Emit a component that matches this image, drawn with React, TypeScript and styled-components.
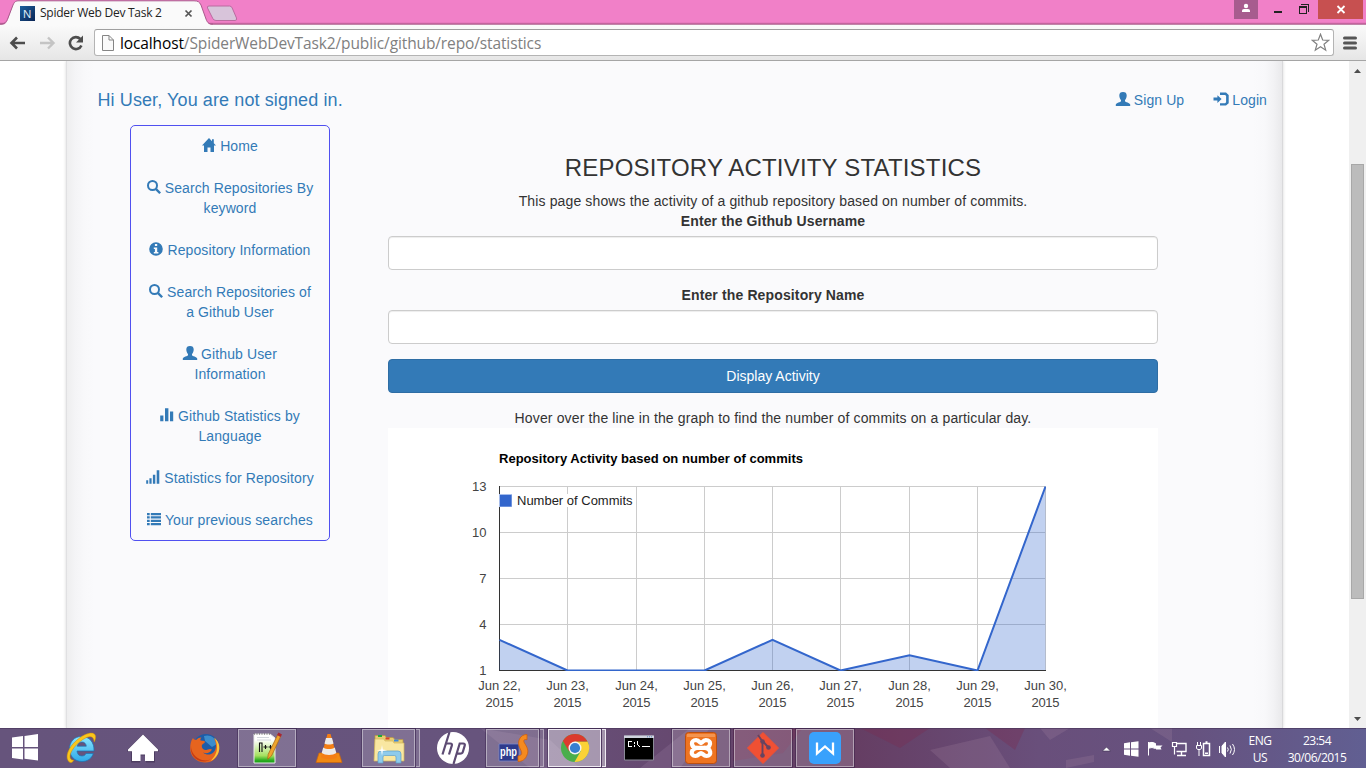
import React from "react";
import styled, { createGlobalStyle } from "styled-components";

const GlobalStyle = createGlobalStyle`
  * { box-sizing: border-box; }
  html, body, #root { margin: 0; height: 100%; }
  body { overflow: hidden; background: #fff; }
`;

const Screen = styled.div`
  width: 1366px;
  height: 768px;
  display: flex;
  flex-direction: column;
  overflow: hidden;
  font-family: "Liberation Sans", Arial, sans-serif;
  font-size: 14px;
  line-height: 20px;
  color: #333;
`;

/* ---------- Browser chrome ---------- */

const TitleBar = styled.header`
  height: 25px;
  flex: none;
  display: flex;
  justify-content: space-between;
  align-items: flex-start;
  background: linear-gradient(#f180c8 0 22px, #e072b6 23px, #a85587 24px, #d9b3ca 25px);
`;

const TabArt = styled.svg`
  grid-area: 1 / 1;
  display: block;
`;

const TabStrip = styled.div`
  display: grid;
  width: 245px;
  height: 25px;
`;

const TabContent = styled.div`
  grid-area: 1 / 1;
  z-index: 1;
  display: flex;
  align-items: center;
  height: 25px;
  padding: 1px 0 0 20px;
`;

const TabTitle = styled.span`
  width: 126px;
  margin-left: 5px;
  font: 12px/16px "Open Sans", "Noto Sans", sans-serif;
  letter-spacing: -0.26px;
  color: #222;
  white-space: nowrap;
`;

const CloseTab = styled.svg`
  display: block;
  margin-left: 18px;
`;

const WindowControls = styled.div`
  display: flex;
  height: 19px;
  margin-right: 3px;
`;

const ControlButton = styled.div<{ $width: number; $bg?: string }>`
  width: ${(p) => p.$width}px;
  height: 19px;
  background: ${(p) => p.$bg ?? "transparent"};
  svg { display: block; }
`;

const Toolbar = styled.div`
  height: 36px;
  flex: none;
  display: flex;
  align-items: center;
  padding: 0 9px 0 9px;
  background: linear-gradient(#fafafa, #e6e6e6);
  border-bottom: 1px solid #a5a5a5;
`;

const NavIcon = styled.svg<{ $gap: number }>`
  display: block;
  flex: none;
  margin-right: ${(p) => p.$gap}px;
`;

const AddressBar = styled.div`
  flex: 1;
  height: 27px;
  display: flex;
  align-items: center;
  margin-right: 9px;
  padding: 0 3px 0 7px;
  background: #fff;
  border: 1px solid #b4b4b4;
  border-top-color: #9f9f9f;
  border-radius: 3px;
`;

const Url = styled.span`
  flex: 1;
  margin-left: 6px;
  font: 15.5px/22px "Open Sans", "Noto Sans", sans-serif;
  letter-spacing: -0.12px;
  color: #808080;
  b { font-weight: 400; color: #000; }
`;

/* ---------- Page ---------- */

const Viewport = styled.div`
  flex: 1;
  min-height: 0;
  display: flex;
  overflow: hidden;
`;

const PageArea = styled.div`
  flex: 1;
  display: flex;
  overflow: hidden;
  padding: 0 66px;
`;

const Sheet = styled.div`
  flex: 1;
  padding: 0 16px 0 31px;
  height: 667px;
  background:
    linear-gradient(to right, #e0e0e2 0 1px, #eeeeef 1px, #f4f4f6 9px, #f8f8fa 18px, rgba(250, 250, 252, 0) 28px) left / 34px 100% no-repeat,
    linear-gradient(to left, #d9d9db 0 1px, #e9e9eb 1px, #f2f2f4 9px, #f8f8fa 18px, rgba(250, 250, 252, 0) 30px) right / 34px 100% no-repeat,
    #fafafc;
  box-shadow: 0 0 3px rgba(0, 0, 0, 0.16);
`;

const PageHeader = styled.div`
  display: flex;
  justify-content: space-between;
  height: 64px;
  padding-top: 29px;
  color: #337ab7;
`;

const Greeting = styled.span`
  font-size: 18px;
  letter-spacing: 0.1px;
  padding-left: 0.5px;
`;

const HeaderLinks = styled.nav`
  display: flex;
  gap: 30px;
`;

const Link = styled.a`
  color: #337ab7;
  text-decoration: none;
  letter-spacing: 0.1px;
`;

const Glyph = styled.svg`
  width: 14px;
  height: 14px;
  vertical-align: -1px;
  fill: currentColor;
`;

const Columns = styled.div`
  display: flex;
  align-items: flex-start;
  padding-left: 33px;
`;

const SideNav = styled.nav`
  width: 200px;
  flex: none;
  display: flex;
  flex-direction: column;
  gap: 2px;
  border: 1px solid #5050f0;
  border-radius: 5px;
`;

const SideItem = styled(Link)`
  display: block;
  padding: 10px 15px;
  text-align: center;
`;

const Main = styled.main`
  width: 770px;
  margin-left: 58px;
  padding-top: 29px;
  text-align: center;
`;

const Heading = styled.h3`
  margin: 0 0 10px;
  font-size: 24px;
  line-height: 27px;
  font-weight: 400;
  letter-spacing: 0.19px;
`;

const Text = styled.p<{ $top?: number }>`
  margin: ${(p) => p.$top ?? 0}px 0 0;
  letter-spacing: 0.135px;
`;

const Field = styled.label`
  display: block;
  margin-bottom: 15px;
  font-weight: 700;
  letter-spacing: 0.13px;
`;

const Input = styled.input`
  display: block;
  width: 100%;
  height: 34px;
  margin-top: 5px;
  padding: 6px 12px;
  background: #fff;
  border: 1px solid #ccc;
  border-radius: 4px;
  box-shadow: inset 0 1px 1px rgba(0, 0, 0, 0.075);
`;

const Submit = styled.button`
  display: block;
  width: 100%;
  height: 34px;
  padding: 0;
  font: 14px/20px "Liberation Sans", Arial, sans-serif;
  color: #fff;
  background: #337ab7;
  border: 1px solid #2e6da4;
  border-radius: 4px;
`;

const Chart = styled.svg`
  display: block;
  background: #fff;
  font-family: "Liberation Sans", Arial, sans-serif;
  font-size: 13px;
`;

const Scrollbar = styled.div`
  width: 17px;
  display: flex;
  flex-direction: column;
  align-items: center;
  background: #f0f0f0;
`;

const ScrollThumb = styled.div`
  width: 13px;
  height: 436px;
  margin: 86px 0 112px;
  background: #bcbcbc;
  border: 1px solid #a8a8a8;
`;

const ScrollArrow = styled.svg`
  display: block;
  flex: none;
`;

/* ---------- Taskbar ---------- */

const Taskbar = styled.footer`
  height: 40px;
  flex: none;
  display: grid;
`;

const Wallpaper = styled.svg`
  grid-area: 1 / 1;
  display: block;
`;

const TaskRow = styled.div`
  grid-area: 1 / 1;
  z-index: 1;
  display: flex;
  height: 40px;
  color: #fff;
`;

const StartButton = styled.div`
  width: 50px;
  height: 40px;
  svg { display: block; }
`;

const TaskSlot = styled.div`
  width: 62px;
  height: 40px;
  display: flex;
  justify-content: center;
  padding: 1px 2px;
`;

const TaskButton = styled.div<{ $kind: "plain" | "open" | "stack" | "active" }>`
  flex: 1;
  display: flex;
  align-items: center;
  justify-content: center;
  height: 38px;
  ${(p) =>
    p.$kind !== "plain" &&
    `
    background: ${p.$kind === "active" ? "rgba(255,255,255,.42)" : "rgba(255,255,255,.17)"};
    border: 1px solid ${p.$kind === "active" ? "#efeaf2" : "rgba(255,255,255,.42)"};
    box-shadow: 0 0 0 1px rgba(40,20,60,.35);
  `}
  svg { display: block; }
`;

const StackEdge = styled.div<{ $active?: boolean }>`
  width: 4px;
  height: 38px;
  margin-left: 1px;
  background: ${(p) => (p.$active ? "rgba(255,255,255,.4)" : "rgba(255,255,255,.15)")};
  border: 1px solid ${(p) => (p.$active ? "#efeaf2" : "rgba(255,255,255,.4)")};
  border-left: 0;
`;

const Tray = styled.div`
  display: flex;
  margin-left: auto;
  padding-right: 12px;
  font: 12px/17px "Open Sans", "Noto Sans", sans-serif;
  text-align: center;
`;

const TrayText = styled.div<{ $width: number }>`
  width: ${(p) => p.$width}px;
  padding-top: 4px;
  letter-spacing: -0.5px;
  white-space: nowrap;
`;

/* ---------- Icons ---------- */

type GlyphName = "home" | "search" | "info" | "user" | "stats" | "signal" | "list" | "login";

const glyphs: Record<GlyphName, React.ReactNode> = {
  home: <path d="M7 0 0 7.6h2V14h3.5v-4.5h3V14H12V7.6h2L11.8 5.2V1.3H10v2z" />,
  search: (
    <>
      <circle cx="5.5" cy="5.5" r="4.5" fill="none" stroke="currentColor" strokeWidth="2" />
      <path d="m8.200 9.900 1.700-1.600 4.100 4.100-1.700 1.600z" />
    </>
  ),
  info: (
    <path
      fillRule="evenodd"
      d="M7 .2a6.8 6.8 0 1 0 0 13.6A6.8 6.8 0 0 0 7 .2zM5.9 2.1h2.3v2H5.9zM4.8 5.5h3.4v4.6h1.2v1.5H4.8v-1.5h1.1V7H4.8z"
    />
  ),
  user: (
    <path d="M7 0c2.5 0 3.700 1.200 3.700 3.400 0 1.6-.700 3.500-1.700 4.600v1.2c.3.9 4.900 1.400 5.200 3.400V14H-.200v-1.4c.3-2 4.900-2.500 5.200-3.400V8C4 6.900 3.300 5 3.300 3.400 3.300 1.200 4.500 0 7 0z" />
  ),
  stats: <path d="M.2 7.500h3.200v5.700H.2zM5 .300h3.400v12.900H5zM10 3.500h3.200v9.700H10z" />,
  signal: <path d="M.2 10.200h2v3.500h-2zM3.400 8.300h2.200v5.400H3.400zM6.900 4.700h2.400v9H6.900zM10.700.200h2.600v13.500h-2.600z" />,
  list: (
    <path d="M0 .900h2.700v2.300H0zM3.800.900H14v2.300H3.800zM0 4.300h2.700v2.300H0zM3.800 4.300H14v2.300H3.800zM0 7.700h2.700V10H0zM3.800 7.700H14V10H3.800zM0 11h2.700v2.300H0zM3.800 11H14v2.300H3.800z" />
  ),
  login: (
    <>
      <path d="M-.500 5.500h3.900V3.200l4.200 3.900L3.400 11V8.500H-.500z" />
      <path d="M6 .600h6L14.700 3v8.200L12 13.500H6v-2.200h5.100l1-1V4l-1-1H6z" />
    </>
  ),
};

const Icon = ({ name }: { name: GlyphName }) => <Glyph viewBox="0 0 14 14" overflow="visible">{glyphs[name]}</Glyph>;

const sideItems: { icon: GlyphName; label: string }[] = [
  { icon: "home", label: "Home" },
  { icon: "search", label: "Search Repositories By keyword" },
  { icon: "info", label: "Repository Information" },
  { icon: "search", label: "Search Repositories of a Github User" },
  { icon: "user", label: "Github User Information" },
  { icon: "stats", label: "Github Statistics by Language" },
  { icon: "signal", label: "Statistics for Repository" },
  { icon: "list", label: "Your previous searches" },
];

const xs = [111.5, 179.5, 248.5, 316.5, 384.5, 452.5, 521.5, 589.5, 657.5];
const yTicks = [13, 10, 7, 4, 1];
const commits = [3, 1, 1, 1, 3, 1, 2, 1, 13];
const yOf = (v: number) => 242.5 - ((v - 1) / 12) * 184;

const ActivityChart = () => {
  const line = commits.map((v, i) => `${xs[i]},${yOf(v)}`).join(" ");
  return (
    <Chart width="770" height="300">
      <text x="111" y="35" fontWeight="700" fill="#000" textLength="304">
        Repository Activity based on number of commits
      </text>
      <g stroke="#ccc" shapeRendering="crispEdges">
        {yTicks.map((v) => (
          <line key={v} x1="111" x2="658" y1={yOf(v)} y2={yOf(v)} />
        ))}
        {xs.map((x) => (
          <line key={x} x1={x} x2={x} y1="58" y2="243" />
        ))}
      </g>
      <path d="M111.5 58V243" stroke="#333" shapeRendering="crispEdges" />
      <polygon points={`111.5,242.5 ${line} 657.5,242.5`} fill="#3366cc" fillOpacity=".3" />
      <path d="M111 242.500H658" stroke="#333" shapeRendering="crispEdges" />
      <clipPath id="plot"><rect x="111" y="58" width="547" height="185" /></clipPath>
      <polyline clipPath="url(#plot)" points={line} fill="none" stroke="#3366cc" strokeWidth="2" />
      <rect x="124" y="66" width="121" height="13" fill="#fff" />
      <rect x="111" y="66" width="13" height="13" fill="#a6bdec" />
      <rect x="112" y="67" width="11.500" height="11.500" fill="#3366cc" />
      <text x="129" y="77" fill="#222" textLength="115.500">Number of Commits</text>
      <g fill="#444" textAnchor="end">
        {yTicks.map((v) => (
          <text key={v} x="98.500" y={yOf(v) + 4.500}>{v}</text>
        ))}
      </g>
      <g fill="#444" textAnchor="middle">
        {xs.map((x, i) => (
          <React.Fragment key={x}>
            <text x={x} y="262" textLength="42.500">{`Jun ${22 + i},`}</text>
            <text x={x} y="279" textLength="28">2015</text>
          </React.Fragment>
        ))}
      </g>
    </Chart>
  );
};

const TaskSvg = ({ children }: { children: React.ReactNode }) => (
  <svg width="32" height="32" viewBox="0 0 32 32">{children}</svg>
);

const IconIE = () => (
  <TaskSvg>
    <defs>
      <linearGradient id="ie" x1="0" y1="0" x2="0" y2="1">
        <stop offset="0" stopColor="#8be6ff" />
        <stop offset="1" stopColor="#2fa9e8" />
      </linearGradient>
    </defs>
    <path
      d="M16.500 4.500C9 4.500 4.500 10 4.500 17S9.500 29.500 17 29.500c5.500 0 9.700-3 11.300-8h-7.300c-.800 1.700-2.200 2.500-4 2.500-3 0-4.800-1.900-5-5h17C29.500 10.500 24.500 4.500 16.500 4.500zM12.200 14.200c.500-2.600 2.300-4.200 4.700-4.200s4.100 1.600 4.400 4.200z"
      fill="url(#ie)" stroke="#1874b4" strokeWidth=".7"
    />
    <path d="M5 30.500C-1 27 2.500 16 12 8 19.500 1.500 28-1 30.200 3c.900 1.800.300 4.300-1 7C28.800 5 26 3.300 21 5.800 12 10 3.500 21 5.200 26c.500 1.600 2 2.200 3.600 2.200C7.800 30 6.500 31 5 30.500z" fill="#fac61c" stroke="#c98a0c" strokeWidth=".5" />
  </TaskSvg>
);

const IconHome = () => (
  <TaskSvg>
    <path d="M16 2 .500 17.500V20H4v10.500h9v-7h6v7h9V20h3.500v-2.500z" fill="#3c2e50" opacity=".6" />
    <path d="M16 2.500 1 17.500v1.800h4V29h8.500v-6.500h4.500V29H27v-9.700h4v-1.800z" fill="#fff" />
  </TaskSvg>
);

const IconFirefox = () => (
  <TaskSvg>
    <circle cx="17" cy="15" r="13" fill="#1d5ca8" />
    <path d="M15 4c5-2 12 1 13 8l-5 3-7-6z" fill="#4aa3dc" opacity=".7" />
    <path d="M4 6c.700 1.500 2 2 3.500 1.800C9 6 10.500 5.300 12.500 5.500c-1 1-1.300 2-1 3 1.500.400 4.500 0 4.500 1.500-.500 1.700-3 2-3.200 3.500-.100 2.500.700 3.500 3.200 4.500 3 0 4.500-2 7-.500-1.500 3.500-6 4.500-9 3 5 4.500 13 1.500 13-7 0-3-1-5.500-2.500-7.500 4.500 3 6.500 8 5.500 13-1.500 7-7 12-14.500 11.500C7 30 1 24 1.200 16 1.300 12 2 8.500 4 6z" fill="#e6641f" />
    <path d="M25 5.500c4.500 3.500 6 8 5 13-1 5-4.500 9-8.500 10.500 4-4 6.500-8 6.500-14 0-3.500-1-7-3-9.500z" fill="#fbc53a" />
    <path d="M2 14c0 6 4 12 11 14 3 .800 6 .500 8-.500-5 3.500-12 2.500-16.500-3C2 21 1.500 17.500 2 14z" fill="#c63c14" />
  </TaskSvg>
);

const IconNotepad = () => (
  <TaskSvg>
    <defs>
      <linearGradient id="npp" x1="0" y1="0" x2="0" y2="1">
        <stop offset=".2" stopColor="#fff" /><stop offset=".75" stopColor="#a4e05e" /><stop offset=".9" stopColor="#2fae22" /><stop offset="1" stopColor="#139b13" />
      </linearGradient>
    </defs>
    <path d="M3 2h16l5 4v25H3z" fill="url(#npp)" stroke="#e9e9e9" />
    <path d="M3 2h16" stroke="#555" strokeDasharray="1 1.500" />
    <path d="M6 5.500h12M6 8h14" stroke="#c9ced6" strokeWidth=".8" />
    <path d="M8.500 20V11h2.500v9M12.500 15h4M14.500 13v4M17.500 15h4M19.500 13v4" stroke="#111" strokeWidth="1.100" fill="none" />
    <path d="m27 2 3 1.700L20.500 24l-3.800 3.200.500-4.900z" fill="#eda52e" stroke="#a86314" strokeWidth=".7" />
    <path d="m26 3 1.500-2.500L31 2.500 29.500 5z" fill="#a82632" />
  </TaskSvg>
);

const IconVlc = () => (
  <TaskSvg>
    <path d="M6 21h20l3 9.500H3z" fill="#f28a12" stroke="#cc650a" strokeWidth=".7" />
    <path d="m14.500 2h3l6.500 23c-3 3-13 3-16 0z" fill="#f57e14" />
    <path d="m13 6h6l1.500 5.500c-2 1.300-7 1.300-9 0zM10.200 15.500c3 2 8.600 2 11.600 0l1.500 5.500c-3.500 2.500-11 2.500-14.600 0z" fill="#eceae8" />
  </TaskSvg>
);

const IconExplorer = () => (
  <TaskSvg>
    <path d="M2 3.500h10l1.500 2H20l2 2h8V28H2z" fill="#e7cc70" stroke="#b79742" strokeWidth=".7" />
    <path d="M2 7h9l1 2h8l1 2h10v18H1z" fill="#f9e7a1" stroke="#d2b45c" strokeWidth=".7" />
    <path d="M5 3h4v2H5z" fill="#1ea93a" /><path d="M12.500 5.500h4v2h-4z" fill="#d8402c" /><path d="M21 7.500h4.500v2H21z" fill="#3b87dc" />
    <path d="M5 31V22q0-3 3-3h17q3 0 3 3v9h-5v-6q0-1.500-1.500-1.500h-10Q10 23.500 10 25v6z" fill="#8ecbec" stroke="#5d9fca" strokeWidth=".7" />
    <path d="m9 13 .8 4.500 4.500.800-4.500.800L9 23.500l-.800-4.400-4.500-.800 4.500-.8z" fill="#fff" />
  </TaskSvg>
);

const IconHp = () => (
  <TaskSvg>
    <circle cx="16" cy="16" r="16" fill="#fff" />
    <g fill="none" stroke="#5d4b73" strokeWidth="2.200">
      <path d="M12.500 0 5.500 22.500" />
      <path d="M9 11.500h4.300q2.200 0 1.500 2.200L12 22.500" />
      <path d="M16.500 32 22.700 11.500h3.400q2.300 0 1.600 2.200l-1.800 6q-.600 2-2.900 2h-3" />
    </g>
  </TaskSvg>
);

const IconPhp = () => (
  <TaskSvg>
    <path d="M2 12h20v17H2z" fill="#2e3b8c" stroke="#7a86c8" strokeWidth=".8" />
    <text x="3" y="24" fontFamily="Liberation Sans, sans-serif" fontWeight="700" fontSize="13" fill="#fff" textLength="17" lengthAdjust="spacingAndGlyphs">php</text>
    <path d="M30 2.500v5.200c-3-.700-4 .800-2.500 3.300 2.500 4 4.500 7.500 2.500 12-1.500 4.500-5 6.500-9 6.500v-5.500c3.500-.500 4.500-2 3-5.500-2-4-3.500-7-1.500-11.500 1.500-3 4-4.500 7.500-4.500z" fill="#f58a1f" stroke="#d0600c" strokeWidth=".8" />
  </TaskSvg>
);

const IconChrome = () => (
  <TaskSvg>
    <circle cx="16" cy="16" r="14" fill="#4aae4c" />
    <path d="M16 9.500h12.500A14 14 0 0 1 15.500 30l6.200-10.700z" fill="#fbd237" />
    <path d="M3.900 9 10.200 19.500 16 9.500h12.500A14 14 0 0 0 3.900 9z" fill="#dc3a2e" />
    <circle cx="16" cy="16" r="6.500" fill="#f5f5f5" />
    <circle cx="16" cy="16" r="5.100" fill="#367fd1" />
  </TaskSvg>
);

const IconCmd = () => (
  <TaskSvg>
    <path d="M1.500 4h29v24h-29z" fill="#000" stroke="#8b8b98" />
    <path d="M1 3.500h30V6H1z" fill="#cfd3dd" />
    <path d="M24 4.800h5" stroke="#5c86c0" strokeDasharray="1 1" />
    <g stroke="#fff" fill="none" shapeRendering="crispEdges">
      <path d="M9 9.500H5.500v5H9M11.500 10v2M11.500 13v2M14.500 9v3l2 3M19 14.500h8" />
    </g>
  </TaskSvg>
);

const IconXampp = () => (
  <TaskSvg>
    <rect x=".5" y=".5" width="31" height="31" rx="3" fill="#ee7421" stroke="#bb4f10" />
    <path d="M2 2h28v3H2z" fill="#f7a365" opacity=".7" />
    <g fill="none" stroke="#fff" strokeWidth="4.200" strokeLinecap="round" strokeLinejoin="round">
      <path d="M7.500 13.500C5 8 12 6.500 14.500 10L16 11l1.500-1C20 6.500 27 8 24.500 13.500 24 15.500 21 16 19.500 15.800" />
      <path d="M7.500 13.500c.500 2 3 2.500 5 2.300C6 16 4.500 24 10.500 24c3 0 4-3 5.500-3s2.500 3 5.500 3c6 0 4.500-8-2-8.200h-7" />
    </g>
  </TaskSvg>
);

const IconGit = () => (
  <TaskSvg>
    <path d="M16 .500 31.500 16 16 31.500.500 16z" fill="#f05033" stroke="#f05033" strokeLinejoin="round" />
    <path d="m11 3 4.500 6.500V23M16 9.500l5.500 6" stroke="#67435f" strokeWidth="1.900" fill="none" />
    <circle cx="15.500" cy="9.500" r="2.300" fill="#67435f" />
    <circle cx="15.500" cy="23.500" r="2.300" fill="#67435f" />
    <circle cx="21.500" cy="15.500" r="2.300" fill="#67435f" />
  </TaskSvg>
);

const IconWps = () => (
  <TaskSvg>
    <rect width="32" height="32" rx="5" fill="#39a1fc" />
    <path d="M8 10.500v11l8-7 8 7v-11" fill="none" stroke="#fff" strokeWidth="2.300" />
  </TaskSvg>
);

const tasks: { id: string; art: React.ReactNode; kind: "plain" | "open" | "stack" | "active" }[] = [
  { id: "ie", art: <IconIE />, kind: "plain" },
  { id: "home", art: <IconHome />, kind: "plain" },
  { id: "firefox", art: <IconFirefox />, kind: "plain" },
  { id: "notepad", art: <IconNotepad />, kind: "open" },
  { id: "vlc", art: <IconVlc />, kind: "plain" },
  { id: "explorer", art: <IconExplorer />, kind: "stack" },
  { id: "hp", art: <IconHp />, kind: "plain" },
  { id: "php", art: <IconPhp />, kind: "stack" },
  { id: "chrome", art: <IconChrome />, kind: "active" },
  { id: "cmd", art: <IconCmd />, kind: "plain" },
  { id: "xampp", art: <IconXampp />, kind: "open" },
  { id: "git", art: <IconGit />, kind: "open" },
  { id: "wps", art: <IconWps />, kind: "open" },
];

const TrayIcons = () => (
  <svg width="144" height="40" fill="none">
    <path d="m6.500 23 4-4 4 4z" fill="#fff" stroke="#3b2b4e" strokeWidth=".6" />
    <path d="M28 15.200l6-.900v6.200h-6zM35 14.200l7.500-1v7.300H35zM28 21.500h6v6.200l-6-.900zM35 21.500h7.500v7.200L35 27.700z" fill="#fff" />
    <path d="M52.500 14v13.500M52.500 15q3.500-1.500 7 .500v5q-3.500-1.800-7-.300" stroke="#fff" fill="#fff" />
    <path d="M60 17.500h6.500l-2 2 1 2H60z" fill="#fff" />
    <path d="M81 15.500h9v8H80.500M85.500 24v3M81 27.500h9" stroke="#fff" strokeWidth="1.400" />
    <path d="M76.500 14.500h4v4h-4zM78.500 18.500v8" stroke="#fff" strokeWidth="1.200" />
    <path d="M107.500 15.500h6v12h-6zM109.500 14h2" stroke="#fff" strokeWidth="1.500" />
    <path d="M109 24.500h3v1.500h-3z" fill="#fff" />
    <path d="M101.500 14v3M104.500 14v3M100.500 17.500h5v3l-1.500 1h-2l-1.500-1zM103 21v7" stroke="#fff" />
    <path d="M123.500 18v7M126 18l3.500-4v15L126 25z" fill="#fff" stroke="#fff" />
    <path d="M131.500 19.500q1.500 2 0 4M134 17.500q2.700 4 0 8M136.500 16q4 5.500 0 11" stroke="#fff" />
  </svg>
);

export default function App() {
  return (
    <Screen>
      <GlobalStyle />
      <TitleBar>
        <TabStrip>
          <TabArt width="245" height="25">
            <path d="M0 25C5 25 6.500 23 8 19L13 5C14.500 1.500 16 .800 19 .800H194C198 .800 199.500 2 201 5L206 19C207.500 23 209 25 213 25z" fill="#fafafa" />
            <path d="M0 24C5 24 6.500 22 8 18L13 5C14.500 1.500 16 .800 19 .800H194C198 .800 199.500 2 201 5L206 19C207.500 23 209 24 213 24" fill="none" stroke="#a95a8c" />
            <path d="M209 6h20.500q2 0 2.700 2l4.300 10q.700 2.500-1.500 2.500H216q-2.500 0-3.300-2.200L207.500 8q-.700-2 1.500-2z" fill="#d8c4da" stroke="#ba6ba0" />
          </TabArt>
          <TabContent>
            <svg width="15" height="15">
              <defs>
                <linearGradient id="fav" x1="0" y1="0" x2="1" y2="1">
                  <stop offset="0" stopColor="#1b5f9c" /><stop offset="1" stopColor="#0a2454" />
                </linearGradient>
              </defs>
              <rect width="15" height="15" fill="url(#fav)" />
              <text x="3" y="11.500" fontFamily="Liberation Sans, sans-serif" fontSize="11.500" fill="#dbe8f4">N</text>
            </svg>
            <TabTitle>Spider Web Dev Task 2</TabTitle>
            <CloseTab width="9" height="9"><path d="m1.500 1.500 6 6m0-6-6 6" stroke="#555" strokeWidth="1.700" /></CloseTab>
          </TabContent>
        </TabStrip>
        <WindowControls>
          <ControlButton $width={24} $bg="#a75c8e">
            <svg width="24" height="19"><circle cx="12" cy="6" r="2.200" fill="#fff" /><path d="M8 12V10.500Q8 9 10 9h4q2 0 2 1.500V12z" fill="#fff" /></svg>
          </ControlButton>
          <ControlButton $width={30}>
            <svg width="30" height="19"><path d="M16 11h8v2h-8z" fill="#222" /></svg>
          </ControlButton>
          <ControlButton $width={30}>
            <svg width="30" height="19" shapeRendering="crispEdges"><path d="M11.500 6.500h7v7h-7z" fill="none" stroke="#222" /><path d="M11 6h8v2h-8zM13 4h8v1h-8zM20 4h1v8h-1z" fill="#222" /></svg>
          </ControlButton>
          <ControlButton $width={45} $bg="#c75050">
            <svg width="45" height="19"><path d="m19.500 6 7 7m0-7-7 7" stroke="#fff" strokeWidth="1.800" /></svg>
          </ControlButton>
        </WindowControls>
      </TitleBar>
      <Toolbar>
        <NavIcon $gap={14} width="17" height="16" fill="none" stroke="#4d4d4d" strokeWidth="2.600"><path d="M16 8H3M8 2.500 2.500 8 8 13.500" /></NavIcon>
        <NavIcon $gap={12} width="16" height="16" fill="none" stroke="#c4c4c4" strokeWidth="2.400"><path d="M0 8h13M8 2.500 13.500 8 8 13.500" /></NavIcon>
        <NavIcon $gap={10} width="16" height="16">
          <path d="M12.300 4A6 6 0 1 0 13.400 10.500" fill="none" stroke="#4d4d4d" strokeWidth="2.600" /><path d="M15 .500v7H8z" fill="#4d4d4d" />
        </NavIcon>
        <AddressBar>
          <svg width="12" height="16"><path d="M.500.500h6.500l4.500 4.500v10.500H.500zM7 .500V5h4.500" fill="#fafafa" stroke="#858585" /></svg>
          <Url><b>localhost</b>/SpiderWebDevTask2/public/github/repo/statistics</Url>
          <svg width="19" height="19"><path d="m9.500 1.200 2.200 5.800 6.100.300-4.800 3.900 1.700 6-5.200-3.400-5.200 3.400 1.700-6L1.200 7.300l6.100-.300z" fill="none" stroke="#808080" strokeWidth="1.200" /></svg>
        </AddressBar>
        <svg width="14" height="14"><path d="M1.500 2h11M1.500 7h11M1.500 12h11" stroke="#555" strokeWidth="3" strokeLinecap="round" /></svg>
      </Toolbar>
      <Viewport>
        <PageArea>
          <Sheet>
            <PageHeader>
              <Greeting>Hi User, You are not signed in.</Greeting>
              <HeaderLinks>
                <Link><Icon name="user" /> Sign Up</Link>
                <Link><Icon name="login" /> Login</Link>
              </HeaderLinks>
            </PageHeader>
            <Columns>
              <SideNav>
                {sideItems.map((item) => (
                  <SideItem key={item.label}><Icon name={item.icon} /> {item.label}</SideItem>
                ))}
              </SideNav>
              <Main>
                <Heading>REPOSITORY ACTIVITY STATISTICS</Heading>
                <Text>This page shows the activity of a github repository based on number of commits.</Text>
                <Field>Enter the Github Username<Input /></Field>
                <Field>Enter the Repository Name<Input /></Field>
                <Submit>Display Activity</Submit>
                <Text $top={15}>Hover over the line in the graph to find the number of commits on a particular day.</Text>
                <ActivityChart />
              </Main>
            </Columns>
          </Sheet>
        </PageArea>
        <Scrollbar>
          <ScrollArrow width="17" height="17"><path d="m5 12 3.500-4 3.500 4z" fill="#4d4d4d" /></ScrollArrow>
          <ScrollThumb />
          <ScrollArrow width="17" height="17"><path d="m5 6 3.500 4L12 6z" fill="#4d4d4d" /></ScrollArrow>
        </Scrollbar>
      </Viewport>
      <Taskbar>
        <Wallpaper width="1366" height="40">
          <defs>
            <linearGradient id="wall">
              <stop offset="0" stopColor="#66547c" /><stop offset=".35" stopColor="#67547d" /><stop offset=".5" stopColor="#66486f" />
              <stop offset=".62" stopColor="#653d62" /><stop offset=".76" stopColor="#694f7b" /><stop offset=".87" stopColor="#66527f" /><stop offset="1" stopColor="#615f92" />
            </linearGradient>
          </defs>
          <rect width="1366" height="40" fill="url(#wall)" />
          <path d="m480 0 70 12 30 28h-50zM640 40l50-40h20l-30 40z" fill="#9a7fa5" opacity=".25" />
          <path d="m733 0h70l-20 25-50 8zM860 0h70l-30 20zM985 0h40l-10 22z" fill="#7a2c50" opacity=".35" />
          <path d="m1040 0h30l-20 12zM930 22l60-14 20 32h-60zM1066 32l28-5v7l-28 6zM1150 0h22v14z" fill="#a987a5" opacity=".22" />
          <path d="M0 .500h1366" stroke="#463458" opacity=".6" />
        </Wallpaper>
        <TaskRow>
          <StartButton>
            <svg width="50" height="40"><path d="m12 9.500 11-1.500v11H12zM24.500 8 38 6v13H24.500zM12 20.500h11v11L12 30zM24.500 20.500H38v12l-13.500-1.800z" fill="#fff" /></svg>
          </StartButton>
          {tasks.map((t) => (
            <TaskSlot key={t.id}>
              <TaskButton $kind={t.kind === "stack" ? "open" : t.kind}>{t.art}</TaskButton>
              {(t.kind === "stack" || t.kind === "active") && <StackEdge $active={t.kind === "active"} />}
            </TaskSlot>
          ))}
          <Tray>
            <TrayIcons />
            <TrayText $width={40}>ENG<br />US</TrayText>
            <TrayText $width={74}>23:54<br />30/06/2015</TrayText>
          </Tray>
        </TaskRow>
      </Taskbar>
    </Screen>
  );
}
